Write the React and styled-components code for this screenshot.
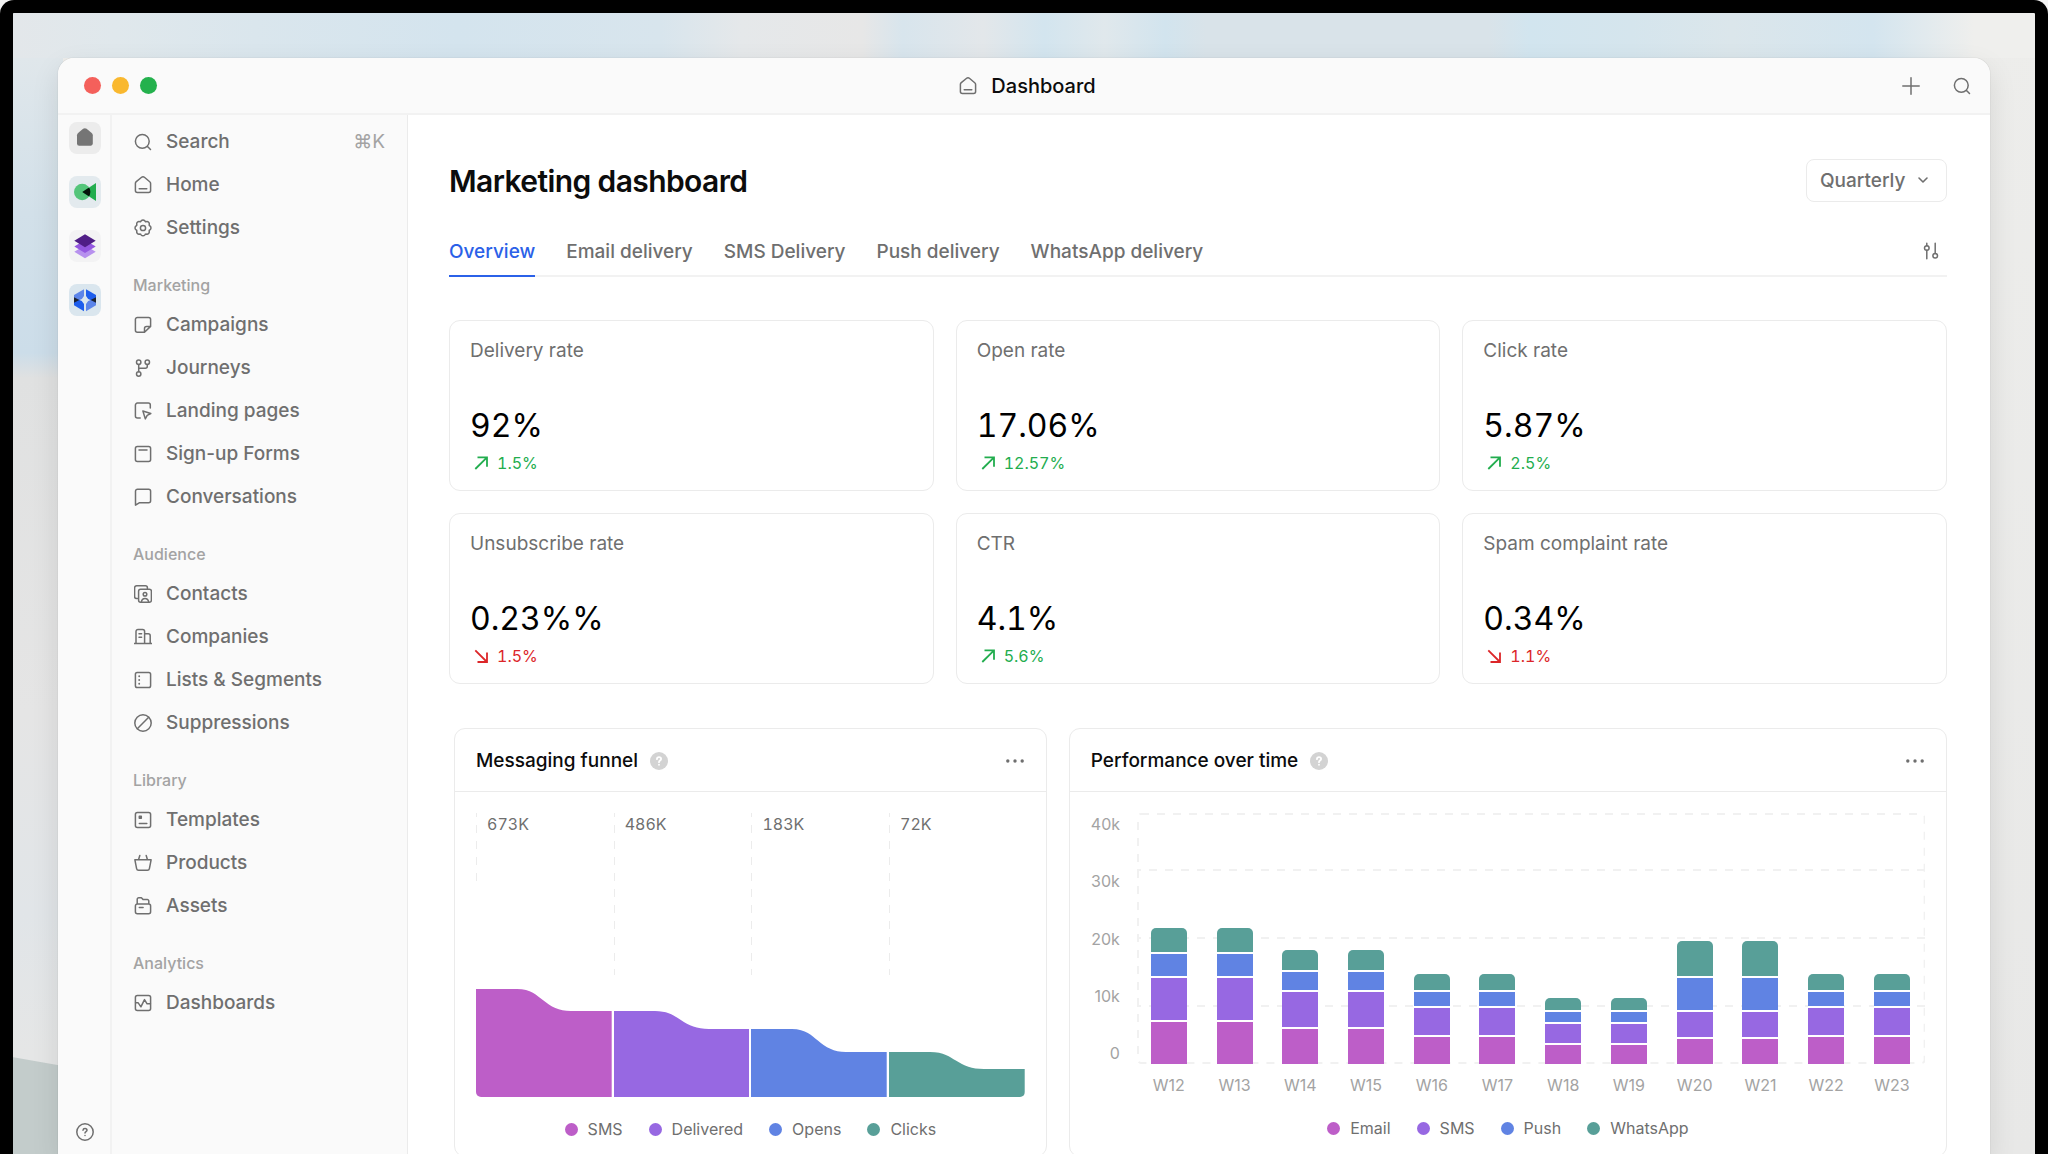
import React from 'react';
import styled, { createGlobalStyle } from 'styled-components';

const colors = {
  text: '#0c0c0c',
  muted: '#6f6f6f',
  faint: '#a3a3a3',
  line: '#f2f2f2',
  border: '#ebebeb',
  panel: '#fafafa',
  accent: '#2b61e8',
  up: '#22ad4e',
  down: '#dc2629',
  pink: '#bd5ec8',
  purple: '#9768e2',
  blue: '#6083e3',
  teal: '#589f98',
};

const GlobalStyle = createGlobalStyle`
  * {
    box-sizing: border-box;
  }

  body {
    margin: 0;
    background: #f4f4f4;
    color: ${colors.text};
    font-family: Inter, 'Liberation Sans', sans-serif;
    font-size: 19px;
    line-height: 24px;
    -webkit-font-smoothing: antialiased;
  }

  button,
  select {
    font: inherit;
    color: inherit;
    background: none;
    border: 0;
    padding: 0;
    cursor: pointer;
  }

  svg {
    display: block;
    flex-shrink: 0;
  }
`;

/* Desktop */

const Screen = styled.div`
  height: 100vh;
  overflow: hidden;
  border: 13px solid #000;
  border-bottom: 0;
  border-radius: 14px 14px 0 0;
  padding: 45px 45px 0;
  background:
    linear-gradient(
      90deg,
      #e3e7ea 0%,
      #e0e8ec 5%,
      #dae6ed 12%,
      #d4e4ee 22%,
      #d8e5ed 32%,
      #e5e8ea 36%,
      #e7e7e7 42%,
      #d8e5ed 44%,
      #e3e7ea 48%,
      #d3e5ef 51%,
      #e0e8ec 54%,
      #d2e4ee 57%,
      #d9e3e9 59%,
      #d9e3e9 73%,
      #d2e5ef 75%,
      #d5e5ed 80%,
      #dbe6eb 85%,
      #d4e5ef 92%,
      #efefed 97%
    ) top / 100% 45px no-repeat,
    linear-gradient(
      190deg,
      transparent 96px,
      #c3cccb 97px
    ) left bottom / 50px 186px no-repeat,
    linear-gradient(
      180deg,
      #e0e7eb 45px,
      #d2e0e9 200px,
      #ccdde9 340px,
      #e0e1e1 365px,
      #e5e5e5 700px,
      #e1e5e8 900px,
      #e5e6e6 1040px
    ) left / 50px 100% no-repeat,
    linear-gradient(180deg, #ededeb, #e8e8e7);
`;

const Window = styled.div`
  height: 100%;
  display: flex;
  flex-direction: column;
  overflow: hidden;
  background: #fff;
  border-radius: 16px 16px 0 0;
  box-shadow: 0 0 1px rgba(0, 0, 0, 0.3), 0 10px 28px rgba(0, 0, 0, 0.1);
`;

const TitleBar = styled.header`
  display: grid;
  grid-template-columns: 1fr auto 1fr;
  align-items: center;
  flex-shrink: 0;
  height: 57px;
  padding: 0 19px 0 26px;
  background: ${colors.panel};
  border-bottom: 2px solid ${colors.line};
`;

const Lights = styled.div`
  display: flex;
  gap: 11px;
`;

const Light = styled.button`
  width: 17px;
  height: 17px;
  border-radius: 50%;
  background: ${(p) => p.$color};
`;

const WindowTitle = styled.div`
  display: flex;
  align-items: center;
  gap: 14px;
  font-size: 20px;
  font-weight: 500;

  svg {
    color: ${colors.muted};
  }
`;

const TitleActions = styled.div`
  display: flex;
  justify-content: flex-end;
  gap: 33px;
  color: ${colors.muted};
`;

const Body = styled.div`
  flex: 1;
  min-height: 0;
  display: flex;
`;

/* App rail and sidebar */

const Rail = styled.aside`
  display: flex;
  flex-direction: column;
  align-items: center;
  gap: 22px;
  width: 54px;
  flex-shrink: 0;
  padding: 7px 0 13px 2px;
  background: ${colors.panel};
  border-right: 2px solid ${colors.line};
`;

const Tile = styled.button`
  width: 32px;
  height: 32px;
  border-radius: 8px;
  background: ${(p) => p.$tint};
`;

const HelpButton = styled.button`
  margin-top: auto;
  color: ${colors.muted};
`;

const Sidebar = styled.nav`
  width: 296px;
  flex-shrink: 0;
  padding: 5px 22px 0 21px;
  background: ${colors.panel};
  border-right: 1px solid ${colors.border};
`;

const SectionLabel = styled.h2`
  margin: 22px 0 4px;
  font-size: 16px;
  font-weight: 500;
  line-height: 28px;
  color: ${colors.faint};
`;

const NavLink = styled.a`
  display: flex;
  align-items: center;
  gap: 14px;
  height: 43px;
  padding-left: 1px;
  font-weight: 500;
  color: ${colors.muted};
  text-decoration: none;
`;

const Shortcut = styled.kbd`
  margin-left: auto;
  font: inherit;
  font-weight: 400;
  color: ${colors.faint};
`;

/* Dashboard */

const Main = styled.main`
  flex: 1;
  min-width: 0;
  padding: 43px 43px 0 41px;
`;

const PageHeader = styled.div`
  display: flex;
  align-items: center;
  justify-content: space-between;
  height: 44px;
`;

const PageTitle = styled.h1`
  margin: 0;
  padding-top: 2px;
  font-size: 30px;
  font-weight: 600;
  line-height: 40px;
  letter-spacing: -0.02em;
`;

const SelectBox = styled.label`
  display: grid;
  align-items: center;
  width: 141px;
  height: 43px;
  border: 1px solid ${colors.border};
  border-radius: 8px;
  color: ${colors.muted};

  select {
    grid-area: 1 / 1;
    height: 100%;
    padding: 2px 0 0 13px;
    appearance: none;
    font-weight: 500;
  }

  svg {
    grid-area: 1 / 1;
    justify-self: end;
    margin-right: 16px;
    pointer-events: none;
  }
`;

const TabBar = styled.div`
  display: flex;
  gap: 31px;
  height: 49px;
  margin-top: 26px;
  padding-right: 7px;
  border-bottom: 2px solid ${colors.line};
`;

const Tab = styled.button`
  height: 49px;
  font-weight: 500;
  color: ${(p) => (p.$active ? colors.accent : colors.muted)};
  border-bottom: 2px solid ${(p) => (p.$active ? colors.accent : 'transparent')};
`;

const FilterButton = styled.button`
  margin-left: auto;
  padding-bottom: 2px;
  color: ${colors.muted};
`;

const Metrics = styled.section`
  display: grid;
  grid-template-columns: repeat(3, 1fr);
  gap: 22px;
  margin-top: 43px;
`;

const MetricCard = styled.article`
  padding: 18px 20px 16px;
  border: 1px solid ${colors.border};
  border-radius: 11px;
`;

const MetricLabel = styled.h3`
  margin: 0;
  font-size: 19px;
  font-weight: 400;
  line-height: 24px;
  color: ${colors.muted};
`;

const MetricValue = styled.div`
  margin: 43px 0 6px;
  font-size: 32px;
  line-height: 40px;
  font-variant-numeric: tabular-nums;
  color: #000;
`;

const Delta = styled.div`
  display: flex;
  align-items: center;
  gap: 8px;
  padding-left: 3px;
  font-size: 16px;
  line-height: 22px;
  font-variant-numeric: tabular-nums;
  color: ${(p) => (p.$down ? colors.down : colors.up)};
`;

const Charts = styled.section`
  display: grid;
  grid-template-columns: 592fr 877fr;
  gap: 22px;
  margin-top: 44px;
  padding-left: 5px;
`;

const ChartCard = styled.article`
  border: 1px solid ${colors.border};
  border-radius: 11px;
`;

const ChartHeader = styled.header`
  display: flex;
  align-items: center;
  gap: 12px;
  height: 63px;
  padding: 1px 22px 0 21px;
  border-bottom: 1px solid ${colors.border};
`;

const ChartTitle = styled.h2`
  margin: 0;
  font-size: 19px;
  font-weight: 500;
  line-height: 24px;
`;

const MoreButton = styled.button`
  margin-left: auto;
  color: ${colors.muted};
`;

const ChartBody = styled.div`
  padding: 21px 21px 16px;
`;

const Legend = styled.ul`
  display: flex;
  justify-content: center;
  gap: 26px;
  margin: 21px 0 0;
  padding: 0;
  list-style: none;
  font-size: 16px;
  line-height: 22px;
  color: ${colors.muted};
`;

const LegendItem = styled.li`
  display: flex;
  align-items: center;
  gap: 10px;

  &::before {
    content: '';
    width: 13px;
    height: 13px;
    border-radius: 50%;
    background: ${(p) => p.$color};
  }
`;

const Funnel = styled.div`
  display: grid;
  grid-template-columns: repeat(4, 1fr);
  gap: 2px;
`;

const Stage = styled.div`
  display: flex;
  flex-direction: column;
  height: 284px;
  overflow: hidden;

  svg {
    width: 100%;
    margin-top: auto;
  }

  &:first-child {
    border-bottom-left-radius: 5px;
  }

  &:last-child {
    border-bottom-right-radius: 5px;
  }
`;

const StageValue = styled.div`
  height: ${(p) => p.$guide}px;
  padding-left: 11px;
  font-size: 16px;
  line-height: 22px;
  font-variant-numeric: tabular-nums;
  color: ${colors.muted};
  background: repeating-linear-gradient(
      180deg,
      #ececec 0 4px,
      transparent 4px 12px,
      #ececec 12px 16px
    )
    left / 1px 100% no-repeat;
`;

const BarChart = styled.div`
  display: grid;
  grid-template-columns: 29px 1fr;
  column-gap: 17px;
  row-gap: 10px;
`;

const YAxis = styled.div`
  display: flex;
  flex-direction: column;
  justify-content: space-between;
  font-size: 16px;
  line-height: 22px;
  text-align: right;
  color: ${colors.faint};
`;

const Plot = styled.div`
  display: grid;
  height: 251px;

  > * {
    grid-area: 1 / 1;
  }
`;

const Bars = styled.div`
  display: flex;
  justify-content: space-between;
  align-items: flex-end;
  padding: 0 15px 0 14px;
`;

const Bar = styled.div`
  display: flex;
  flex-direction: column;
  gap: 2px;
  width: 36px;
  background: #fff;
  border-radius: 5px 5px 0 0;
  overflow: hidden;
`;

const Segment = styled.div`
  background: ${(p) => p.$color};
`;

const XAxis = styled.div`
  grid-column: 2;
  display: flex;
  justify-content: space-between;
  padding: 0 15px 0 14px;
  font-size: 16px;
  line-height: 22px;
  color: ${colors.faint};

  span {
    display: flex;
    justify-content: center;
    width: 36px;
  }
`;

/* Icons */

const Icon = ({ size = 18, children }) => (
  <svg
    width={size}
    height={size}
    viewBox="0 0 18 18"
    fill="none"
    stroke="currentColor"
    strokeWidth="1.5"
    strokeLinecap="round"
    strokeLinejoin="round"
    aria-hidden="true"
  >
    {children}
  </svg>
);

const shapes = {
  search: <path d="M8.3 15.2a6.9 6.9 0 1 0 0-13.8 6.9 6.9 0 0 0 0 13.8zM13.3 13.3l3.2 3.2" />,
  home: (
    <path d="M1.4 7.6c0-.8.3-1.4.9-1.9l5-4.2c1-.8 2.4-.8 3.4 0l5 4.2c.6.5.9 1.1.9 1.9v6.900c0 1.100-.9 2-2 2H3.400c-1.100 0-2-.9-2-2zM5.200 12.700h7.600" />
  ),
  settings: (
    <>
      <path d="M7.3 1.700c.8-1 2.600-1 3.400 0l.5.700c.2.200.5.300.8.300l.9-.1c1.300-.1 2.500 1.100 2.400 2.400l-.1.900c0 .3.100.6.300.8l.7.500c1 .8 1 2.600 0 3.400l-.7.500c-.2.200-.3.500-.3.800l.1.900c.1 1.300-1.100 2.500-2.400 2.400l-.9-.1c-.3 0-.6.100-.8.300l-.5.700c-.8 1-2.600 1-3.400 0l-.5-.7c-.2-.2-.5-.3-.8-.3l-.9.100c-1.300.1-2.500-1.100-2.400-2.400l.1-.9c0-.3-.1-.6-.3-.8l-.7-.5c-1-.8-1-2.600 0-3.400l.7-.5c.2-.2.3-.5.3-.8l-.1-.9c-.1-1.300 1.100-2.500 2.400-2.400l.9.100c.3 0 .6-.1.8-.3z" />
      <circle cx="9" cy="9" r="2.6" />
    </>
  ),
  campaigns: (
    <path d="M10.5 16.3H3.4a2 2 0 0 1-2-2V3.400a2 2 0 0 1 2-2h11.200a2 2 0 0 1 2 2v7zM10.5 16.300v-3.900a2 2 0 0 1 2-2h4.100z" />
  ),
  journeys: (
    <>
      <circle cx="4.7" cy="3.2" r="2.2" />
      <circle cx="13.3" cy="3.2" r="2.2" />
      <circle cx="4.7" cy="15" r="2.2" />
      <path d="M4.7 5.4v7.4M13.3 5.4v1.8a2 2 0 0 1-2 2H4.7" />
    </>
  ),
  landing: (
    <path d="M6.2 16H3.400a2 2 0 0 1-2-2V3.100a2 2 0 0 1 2-2h10.900a2 2 0 0 1 2 2v3M8.900 9l7.900 2.500-3.600 1.800-1.900 3.600z" />
  ),
  forms: (
    <>
      <rect x="1.4" y="1.4" width="15.2" height="15.2" rx="2" />
      <path d="M5 5h8" />
    </>
  ),
  conversations: (
    <path d="M1.5 17.200V3.200a2 2 0 0 1 2-2h11.100a2 2 0 0 1 2 2v9.600a2 2 0 0 1-2 2H5.200z" />
  ),
  contacts: (
    <>
      <path d="M3.400 13.600H2.600a2 2 0 0 1-2-2V2.800a2 2 0 0 1 2-2h8.800a2 2 0 0 1 2 2v.6" />
      <rect x="4.6" y="4.2" width="12.8" height="13" rx="2" />
      <circle cx="11" cy="9.3" r="1.8" />
      <path d="M7.400 16.900c.4-2.300 1.700-3.500 3.600-3.500s3.200 1.200 3.600 3.500" />
    </>
  ),
  companies: (
    <path d="M0 15.400h18M2 15.400V3.400a2 2 0 0 1 2-2h4.600a2 2 0 0 1 2 2v12M10.600 5.800h3.600a2 2 0 0 1 2 2v7.600M5 5.800h2.600M5 9.200h2.600" />
  ),
  lists: (
    <>
      <rect x="1.4" y="1.4" width="15.2" height="15.2" rx="1.8" />
      <path d="M5.2 5.2v.1M5.2 9v.1M5.2 12.7v.1" strokeWidth="1.9" />
    </>
  ),
  suppressions: (
    <>
      <circle cx="9" cy="9" r="8.2" />
      <path d="M3.3 14.7L14.7 3.3" />
    </>
  ),
  templates: (
    <>
      <rect x="1.4" y="1.4" width="15.2" height="15.2" rx="2" />
      <path d="M5.3 12.6h7.5" />
      <rect x="5.3" y="5.2" width="2" height="2" fill="currentColor" />
    </>
  ),
  products: (
    <path d="M.9 5.800h16.200l-1.700 8.900a2 2 0 0 1-2 1.600H4.600a2 2 0 0 1-2-1.600zM4.600 5.500l1.200-4M13.400 5.500l-1.200-4" />
  ),
  assets: (
    <path d="M3.4 7h11.200a2 2 0 0 1 2 2v5.800a2 2 0 0 1-2 2H3.400a2 2 0 0 1-2-2V9a2 2 0 0 1 2-2zM3.200 6.800V2.300a1.500 1.500 0 0 1 1.500-1.500h2.700l1.800 1.800h4.100a1.500 1.500 0 0 1 1.500 1.500v2.700M5.300 10.400h3.800" />
  ),
  dashboards: (
    <>
      <rect x="1.4" y="1.4" width="15.2" height="15.2" rx="2" />
      <path d="M1.6 8.800h2.600l2.700 4 3.600-7.200 2.600 4.200h3.300" />
    </>
  ),
  help: (
    <>
      <circle cx="9" cy="9" r="8.2" />
      <path d="M7 7.200c.1-1.200.9-1.800 2-1.800s2 .7 2 1.800c0 1.400-2 1.500-2 2.900M9 12.500v.1" />
    </>
  ),
  plus: <path d="M9 .8v16.400M.8 9h16.400" />,
  filter: (
    <>
      <circle cx="4.8" cy="6" r="2.3" />
      <circle cx="13.2" cy="13.800" r="2.3" />
      <path d="M4.800 1.200v2.500M4.800 8.300v8.500M13.200 1.200v10.300" />
    </>
  ),
  more: (
    <g fill="currentColor" stroke="none">
      <circle cx="1.8" cy="9" r="1.7" />
      <circle cx="9" cy="9" r="1.7" />
      <circle cx="16.2" cy="9" r="1.7" />
    </g>
  ),
};

const TrendArrow = ({ down }) => (
  <svg width="16" height="16" viewBox="0 0 16 16" fill="none" stroke="currentColor" strokeWidth="1.8" aria-hidden="true">
    <path d={down ? 'M2.3 2.3L14 14M14 4.5V14H4.500' : 'M2.3 14L14 2.3M4.5 2.3H14v9.5'} />
  </svg>
);

const HelpDot = () => (
  <svg width="18" height="18" viewBox="0 0 18 18" fill="none" role="img" aria-label="More information">
    <circle cx="9" cy="9" r="9" fill="#d3d3d3" />
    <path
      d="M6.9 7.2c.1-1.300.9-2 2.100-2s2.100.8 2.100 1.900c0 1.500-2.100 1.500-2.100 3.100M9 12.600v.2"
      stroke="#fff"
      strokeWidth="1.8"
      strokeLinecap="round"
    />
  </svg>
);

/* Workspace logos, one per rail tile */

const HomeLogo = () => (
  <svg width="32" height="32" viewBox="0 0 32 32" aria-hidden="true">
    <path
      d="M8 13.300c0-1 .4-1.700 1.100-2.300l5-4.200c1-.8 2.500-.8 3.500 0l5.100 4.200c.7.600 1.100 1.300 1.100 2.300v8.300c0 1.200-1 2.200-2.200 2.200H10.200A2.200 2.200 0 0 1 8 21.600z"
      fill="#757575"
    />
  </svg>
);

const PlayLogo = () => (
  <svg width="32" height="32" viewBox="0 0 32 32" aria-hidden="true">
    <clipPath id="disc">
      <circle cx="13.2" cy="16" r="8.2" />
    </clipPath>
    <circle cx="13.2" cy="16" r="8.2" fill="#54c57a" />
    <path d="M27 7v18L13.300 16z" fill="#22ad4e" />
    <path d="M27 7v18L13.300 16z" fill="#06140b" clipPath="url(#disc)" />
  </svg>
);

const StackLogo = () => (
  <svg width="32" height="32" viewBox="0 0 32 32" aria-hidden="true">
    <path d="M16 15.300l10.700 6.500L16 28.300 5.300 21.800z" fill="#b791ee" />
    <path d="M16 9.900l10.700 6.500L16 22.900 5.300 16.400z" fill="#9457e0" />
    <path d="M16 4.300l10.700 6.500L16 17.300 5.300 10.800z" fill="#4f1d86" />
  </svg>
);

const HexLogo = () => (
  <svg width="32" height="32" viewBox="0 0 32 32" aria-hidden="true">
    <path d="M15 5.300L5 11v5.200l5.400-.2 2.400-1 2.200-3z" fill="#5c85e9" />
    <path d="M5 15.800v5.400l10 6V20l-2.200-3-2.400-1z" fill="#1e5eec" />
    <path d="M17 5.300L27 11v5.200l-5.400-.2-2.400-1-2.200-3z" fill="#1e5eec" />
    <path d="M27 15.800v5.400l-10 6V20l2.200-3 2.400-1z" fill="#5c85e9" />
    <path d="M5 13.300l5.400 2.700L5 18.700zM27 13.300L21.600 16l5.400 2.700z" fill="#1c2230" />
  </svg>
);

/* Data */

const workspaces = [
  { name: 'Home', tint: '#ececec', Logo: HomeLogo },
  { name: 'Play', tint: '#e3eaee', Logo: PlayLogo },
  { name: 'Stack', tint: '#f3f3f4', Logo: StackLogo },
  { name: 'Hex', tint: '#dae6ee', Logo: HexLogo },
];

const navGroups = [
  {
    items: [
      { icon: 'search', label: 'Search', shortcut: '⌘K' },
      { icon: 'home', label: 'Home' },
      { icon: 'settings', label: 'Settings' },
    ],
  },
  {
    title: 'Marketing',
    items: [
      { icon: 'campaigns', label: 'Campaigns' },
      { icon: 'journeys', label: 'Journeys' },
      { icon: 'landing', label: 'Landing pages' },
      { icon: 'forms', label: 'Sign-up Forms' },
      { icon: 'conversations', label: 'Conversations' },
    ],
  },
  {
    title: 'Audience',
    items: [
      { icon: 'contacts', label: 'Contacts' },
      { icon: 'companies', label: 'Companies' },
      { icon: 'lists', label: 'Lists & Segments' },
      { icon: 'suppressions', label: 'Suppressions' },
    ],
  },
  {
    title: 'Library',
    items: [
      { icon: 'templates', label: 'Templates' },
      { icon: 'products', label: 'Products' },
      { icon: 'assets', label: 'Assets' },
    ],
  },
  {
    title: 'Analytics',
    items: [{ icon: 'dashboards', label: 'Dashboards' }],
  },
];

const tabs = ['Overview', 'Email delivery', 'SMS Delivery', 'Push delivery', 'WhatsApp delivery'];

const metrics = [
  { label: 'Delivery rate', value: '92%', delta: '1.5%' },
  { label: 'Open rate', value: '17.06%', delta: '12.57%' },
  { label: 'Click rate', value: '5.87%', delta: '2.5%' },
  { label: 'Unsubscribe rate', value: '0.23%%', delta: '1.5%', down: true },
  { label: 'CTR', value: '4.1%', delta: '5.6%' },
  { label: 'Spam complaint rate', value: '0.34%', delta: '1.1%', down: true },
];

const stages = [
  { name: 'SMS', value: '673K', from: 108, to: 86, color: colors.pink, guide: 68 },
  { name: 'Delivered', value: '486K', from: 86, to: 68, color: colors.purple, guide: 162 },
  { name: 'Opens', value: '183K', from: 68, to: 45, color: colors.blue, guide: 162 },
  { name: 'Clicks', value: '72K', from: 45, to: 28, color: colors.teal, guide: 162 },
];

const series = [
  { name: 'Email', color: colors.pink },
  { name: 'SMS', color: colors.purple },
  { name: 'Push', color: colors.blue },
  { name: 'WhatsApp', color: colors.teal },
];

// segment heights, bottom to top, in the order of `series`
const weeks = [
  { week: 'W12', values: [42, 42, 22, 24] },
  { week: 'W13', values: [42, 42, 22, 24] },
  { week: 'W14', values: [35, 35, 18, 20] },
  { week: 'W15', values: [35, 35, 18, 20] },
  { week: 'W16', values: [27, 27, 14, 16] },
  { week: 'W17', values: [27, 27, 14, 16] },
  { week: 'W18', values: [19, 19, 10, 12] },
  { week: 'W19', values: [19, 19, 10, 12] },
  { week: 'W20', values: [25, 25, 32, 35] },
  { week: 'W21', values: [25, 25, 32, 35] },
  { week: 'W22', values: [27, 27, 14, 16] },
  { week: 'W23', values: [27, 27, 14, 16] },
];

const stagePath = ({ from, to }) => {
  const drop = from - to;
  return `M0 0H41C55 0 61 ${drop * 0.3} 67 ${drop / 2}C75 ${drop * 0.8} 83 ${drop} 95 ${drop}H136V${from}H0Z`;
};

const ChartPanel = ({ title, legend, children }) => (
  <ChartCard>
    <ChartHeader>
      <ChartTitle>{title}</ChartTitle>
      <HelpDot />
      <MoreButton aria-label={`${title} options`}>
        <Icon>{shapes.more}</Icon>
      </MoreButton>
    </ChartHeader>
    <ChartBody>
      {children}
      <Legend>
        {legend.map(({ name, color }) => (
          <LegendItem key={name} $color={color}>
            {name}
          </LegendItem>
        ))}
      </Legend>
    </ChartBody>
  </ChartCard>
);

const App = () => {
  return (
    <>
      <GlobalStyle />
      <Screen>
        <Window>
          <TitleBar>
            <Lights>
              <Light $color="#f4605b" aria-label="Close" />
              <Light $color="#f9b82f" aria-label="Minimize" />
              <Light $color="#24b14d" aria-label="Zoom" />
            </Lights>
            <WindowTitle>
              <Icon>{shapes.home}</Icon>
              Dashboard
            </WindowTitle>
            <TitleActions>
              <button aria-label="Add">
                <Icon>{shapes.plus}</Icon>
              </button>
              <button aria-label="Search">
                <Icon>{shapes.search}</Icon>
              </button>
            </TitleActions>
          </TitleBar>

          <Body>
            <Rail>
              {workspaces.map(({ name, tint, Logo }) => (
                <Tile key={name} $tint={tint} aria-label={name}>
                  <Logo />
                </Tile>
              ))}
              <HelpButton aria-label="Help">
                <Icon>{shapes.help}</Icon>
              </HelpButton>
            </Rail>

            <Sidebar>
              {navGroups.map(({ title, items }) => (
                <React.Fragment key={title || 'top'}>
                  {title && <SectionLabel>{title}</SectionLabel>}
                  {items.map(({ icon, label, shortcut }) => (
                    <NavLink key={label} href="#">
                      <Icon>{shapes[icon]}</Icon>
                      {label}
                      {shortcut && <Shortcut>{shortcut}</Shortcut>}
                    </NavLink>
                  ))}
                </React.Fragment>
              ))}
            </Sidebar>

            <Main>
              <PageHeader>
                <PageTitle>Marketing dashboard</PageTitle>
                <SelectBox>
                  <select aria-label="Period" defaultValue="Quarterly">
                    <option>Quarterly</option>
                  </select>
                  <svg width="14" height="14" viewBox="0 0 14 14" fill="none" stroke="currentColor" strokeWidth="1.6">
                    <path d="M3 5l4 4 4-4" strokeLinecap="round" strokeLinejoin="round" />
                  </svg>
                </SelectBox>
              </PageHeader>

              <TabBar role="tablist">
                {tabs.map((tab, i) => (
                  <Tab key={tab} role="tab" aria-selected={i === 0} $active={i === 0}>
                    {tab}
                  </Tab>
                ))}
                <FilterButton aria-label="Filter">
                  <Icon>{shapes.filter}</Icon>
                </FilterButton>
              </TabBar>

              <Metrics>
                {metrics.map(({ label, value, delta, down }) => (
                  <MetricCard key={label}>
                    <MetricLabel>{label}</MetricLabel>
                    <MetricValue>{value}</MetricValue>
                    <Delta $down={down}>
                      <TrendArrow down={down} />
                      {delta}
                    </Delta>
                  </MetricCard>
                ))}
              </Metrics>

              <Charts>
                <ChartPanel title="Messaging funnel" legend={stages}>
                  <Funnel>
                    {stages.map((stage) => (
                      <Stage key={stage.name}>
                        <StageValue $guide={stage.guide}>{stage.value}</StageValue>
                        <svg
                          height={stage.from}
                          viewBox={`0 0 136 ${stage.from}`}
                          preserveAspectRatio="none"
                          aria-hidden="true"
                        >
                          <path d={stagePath(stage)} fill={stage.color} />
                        </svg>
                      </Stage>
                    ))}
                  </Funnel>
                </ChartPanel>

                <ChartPanel title="Performance over time" legend={series}>
                  <BarChart>
                    <YAxis>
                      {['40k', '30k', '20k', '10k', '0'].map((tick) => (
                        <span key={tick}>{tick}</span>
                      ))}
                    </YAxis>
                    <Plot>
                      <svg width="100%" height="251" stroke="#f1f1f1" strokeWidth="2" strokeDasharray="8 8" aria-hidden="true">
                        <rect x="1" y="1" width="99.8%" height="249" rx="3" fill="none" />
                        {[57, 125, 193].map((y) => (
                          <line key={y} x1="0" x2="100%" y1={y} y2={y} strokeDashoffset="4" />
                        ))}
                      </svg>
                      <Bars>
                        {weeks.map(({ week, values }) => (
                          <Bar key={week}>
                            {values
                              .map((value, i) => (
                                <Segment key={series[i].name} $color={series[i].color} style={{ height: value }} />
                              ))
                              .reverse()}
                          </Bar>
                        ))}
                      </Bars>
                    </Plot>
                    <XAxis>
                      {weeks.map(({ week }) => (
                        <span key={week}>{week}</span>
                      ))}
                    </XAxis>
                  </BarChart>
                </ChartPanel>
              </Charts>
            </Main>
          </Body>
        </Window>
      </Screen>
    </>
  );
};

export default App;
